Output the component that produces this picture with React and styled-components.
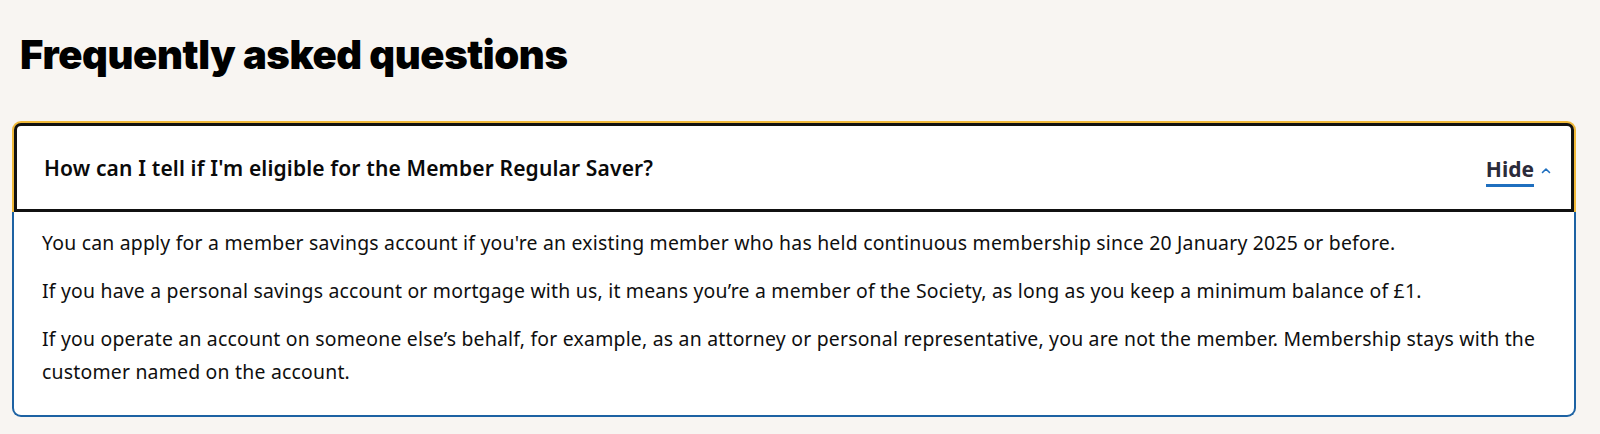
import React from "react";
import styled, { createGlobalStyle } from "styled-components";

const Global = createGlobalStyle`
  html, body {
    margin: 0;
    padding: 0;
    background: #f8f5f2;
  }
  body {
    font-family: "Noto Sans", "Open Sans", sans-serif;
    color: #0a0a0a;
  }
`;

const answers = [
  "You can apply for a member savings account if you're an existing member who has held continuous membership since 20 January 2025 or before.",
  "If you have a personal savings account or mortgage with us, it means you\u2019re a member of the Society, as long as you keep a minimum balance of \u00a31.",
  "If you operate an account on someone else\u2019s behalf, for example, as an attorney or personal representative, you are not the member. Membership stays with the customer named on the account.",
];

const App = () => {
  return (
    <Page>
      <Global />
      <Title>Frequently asked questions</Title>
      <Item>
        <Question>
          <QText>How can I tell if I'm eligible for the Member Regular Saver?</QText>
          <Toggle>
            <ToggleLabel>Hide</ToggleLabel>
            <svg width="10" height="8" viewBox="0 0 10 8">
              <path d="M1.5 5.5 L5 2 L8.5 5.5" fill="none" stroke="#1f6fbf" strokeWidth="1.6" strokeLinecap="round" strokeLinejoin="round" />
            </svg>
          </Toggle>
        </Question>
        <Answer>
          {answers.map((a, i) => (
            <Para key={i}>{a}</Para>
          ))}
        </Answer>
      </Item>
    </Page>
  );
};

const Page = styled.div`
  padding: 30px 24px 17px 12px;
`;

const Title = styled.h2`
  margin: 0 0 43px 8px;
  font-family: Inter, "Noto Sans", sans-serif;
  font-weight: 900;
  font-size: 40px;
  line-height: 50px;
  letter-spacing: -0.4px;
  color: #000;
`;

const Item = styled.div`
  background: transparent;
`;

const Question = styled.div`
  display: flex;
  align-items: center;
  justify-content: space-between;
  height: 83px;
  margin: 2px 2px 0;
  padding: 0 20px 0 27px;
  border: 3px solid #111;
  border-radius: 7px 7px 0 0;
  box-shadow: 0 0 0 2px #f0b93a;
  background: #fff;
`;

const QText = styled.span`
  font-family: "Noto Sans", sans-serif;
  font-size: 21px;
  font-weight: 600;
  letter-spacing: 0.15px;
  color: #0a0a0a;
`;

const Toggle = styled.span`
  display: flex;
  align-items: center;
  gap: 7px;
  margin-top: 6px;
`;

const ToggleLabel = styled.span`
  font-family: "Noto Sans", sans-serif;
  font-size: 21px;
  font-weight: 700;
  color: #2b2b3a;
  padding-bottom: 1px;
  border-bottom: 3px solid #1f6fbf;
`;

const Answer = styled.div`
  background: #fff;
  border: 2px solid #1d62a3;
  border-top: none;
  border-radius: 0 0 9px 9px;
  padding: 14px 22px 12px 28px;
`;

const Para = styled.p`
  margin: 0 0 15px;
  font-size: 19.4px;
  line-height: 33px;
  letter-spacing: 0.22px;
  color: #0f0f0f;
`;

export default App;
